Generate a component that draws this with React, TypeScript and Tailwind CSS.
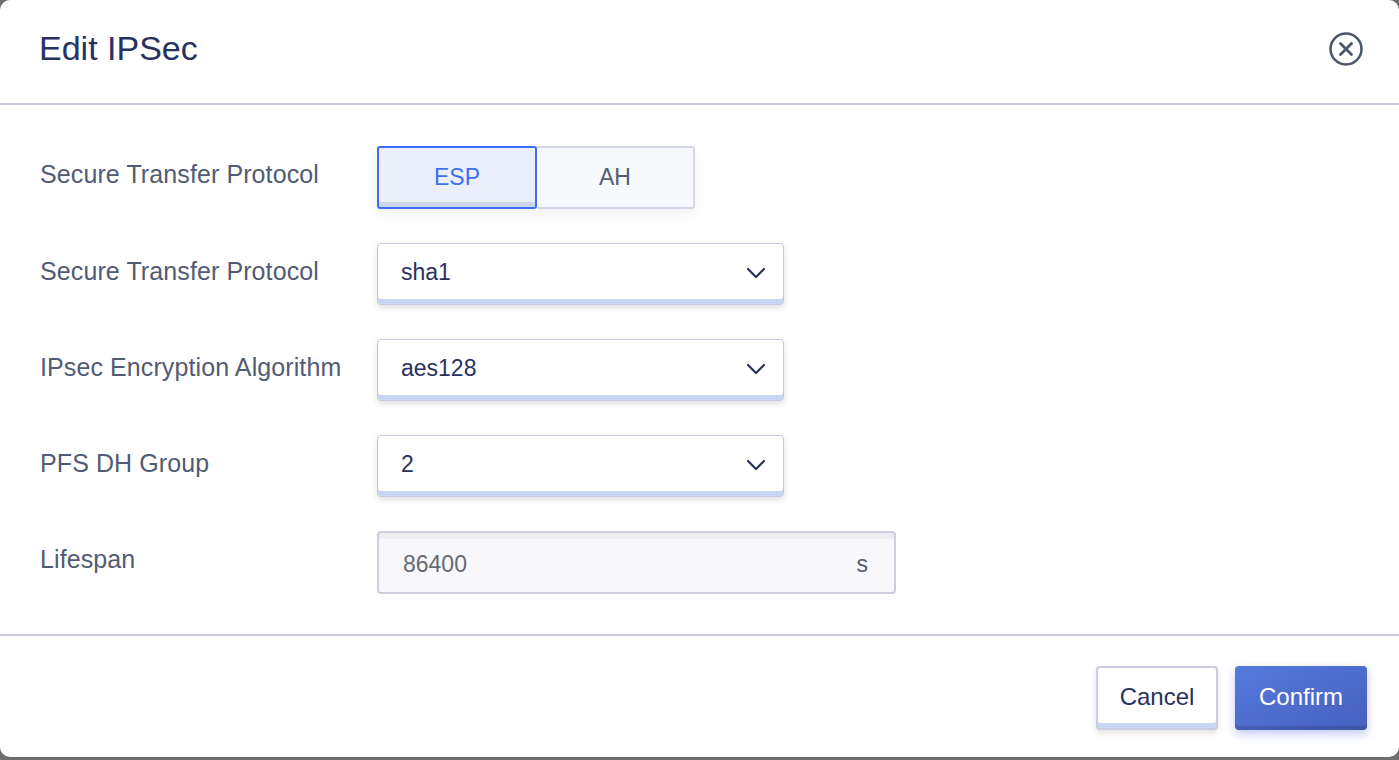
import { useState } from "react";

// Select with chevron, styled like the reference
function SelectBox({ value }: { value: string }) {
  return (
    <div className="flex h-[62px] w-[407px] items-center justify-between rounded-[4px] border-[1.5px] border-[#c3c8da] bg-white pl-[23px] pr-[17px] pb-[3px] text-[23px] text-[#28315f] shadow-[inset_0_-5px_0_#c7d5f5,0_3px_6px_rgba(0,0,0,0.12)]">
      <span>{value}</span>
      <svg width="20" height="12" viewBox="0 0 20 12" fill="none">
        <path d="M2 2l8 8 8-8" stroke="#28315f" strokeWidth="2.2" strokeLinecap="round" strokeLinejoin="round" />
      </svg>
    </div>
  );
}

function Row({ label, children }: { label: string; children: React.ReactNode }) {
  return (
    <div className="flex items-center">
      <div className="w-[337px] pb-[5px] text-[25px] tracking-[0.1px] text-[#525b74]">{label}</div>
      {children}
    </div>
  );
}

export default function App() {
  const [proto, setProto] = useState("ESP");

  return (
    <div className="h-[760px] w-[1399px] overflow-hidden bg-[#6e6e6e] font-['Liberation_Sans',Arial,sans-serif]">
      <div className="flex h-[757px] flex-col overflow-hidden rounded-[10px] bg-white">
        {/* Header */}
        <div className="flex h-[105px] items-center justify-between border-b-2 border-[#c8cada] pl-[39px] pr-[35px]">
          <h1 className="pb-[6px] text-[34px] text-[#283260]">Edit IPSec</h1>
          <svg width="36" height="36" viewBox="0 0 36 36" fill="none" className="mb-[5px]">
            <circle cx="18" cy="18" r="15.5" stroke="#4a5568" strokeWidth="2.5" />
            <path d="M12.5 12.5l11 11M23.5 12.5l-11 11" stroke="#4a5568" strokeWidth="2.8" strokeLinecap="round" />
          </svg>
        </div>

        {/* Body */}
        <div className="flex flex-col gap-[34px] border-b-2 border-[#c8cada] pt-[41px] pb-[40px] pl-[40px]">
          <Row label="Secure Transfer Protocol">
            <div className="flex h-[63px] w-[318px] text-[23px] shadow-[0_6px_14px_rgba(0,0,0,0.06)]">
              {["ESP", "AH"].map((p) =>
                proto === p ? (
                  <button
                    key={p}
                    onClick={() => setProto(p)}
                    className="flex flex-1 items-center justify-center rounded-[3px] border-2 border-[#3b6ef5] bg-[#ebeffb] pb-[1px] text-[#3f70f0] shadow-[inset_0_-5px_0_#cdd6ef]"
                  >
                    {p}
                  </button>
                ) : (
                  <button
                    key={p}
                    onClick={() => setProto(p)}
                    className="flex flex-1 items-center justify-center rounded-r-[3px] border-2 border-l-0 border-[#d4d7e7] bg-[#f8f9fc] pb-[1px] text-[#535c74]"
                  >
                    {p}
                  </button>
                )
              )}
            </div>
          </Row>
          <Row label="Secure Transfer Protocol">
            <SelectBox value="sha1" />
          </Row>
          <Row label="IPsec Encryption Algorithm">
            <SelectBox value="aes128" />
          </Row>
          <Row label="PFS DH Group">
            <SelectBox value="2" />
          </Row>
          <Row label="Lifespan">
            <div className="flex h-[63px] w-[519px] items-center justify-between rounded-[4px] border-2 border-[#cdd0dc] bg-[#f8f8fa] pl-[24px] pr-[26px] pt-[4px] text-[23px] shadow-[inset_0_6px_0_#eeeef2]">
              <span className="text-[#666a73]">86400</span>
              <span className="text-[#535c74]">s</span>
            </div>
          </Row>
        </div>

        {/* Footer */}
        <div className="flex justify-end gap-[17px] pt-[30px] pr-[32px]">
          <button className="h-[64px] w-[122px] rounded-[4px] border-2 border-[#c9cddd] bg-white pb-[2px] text-[24px] text-[#28315f] shadow-[inset_0_-5px_0_#c8d6f5,0_3px_6px_rgba(0,0,0,0.12)]">
            Cancel
          </button>
          <button className="h-[64px] w-[132px] rounded-[4px] bg-gradient-to-br from-[#557ade] to-[#4760bd] pb-[2px] text-[24px] text-white shadow-[inset_0_-4px_0_rgba(0,0,0,0.12),0_4px_10px_rgba(70,100,220,0.35)]">
            Confirm
          </button>
        </div>
      </div>
    </div>
  );
}
